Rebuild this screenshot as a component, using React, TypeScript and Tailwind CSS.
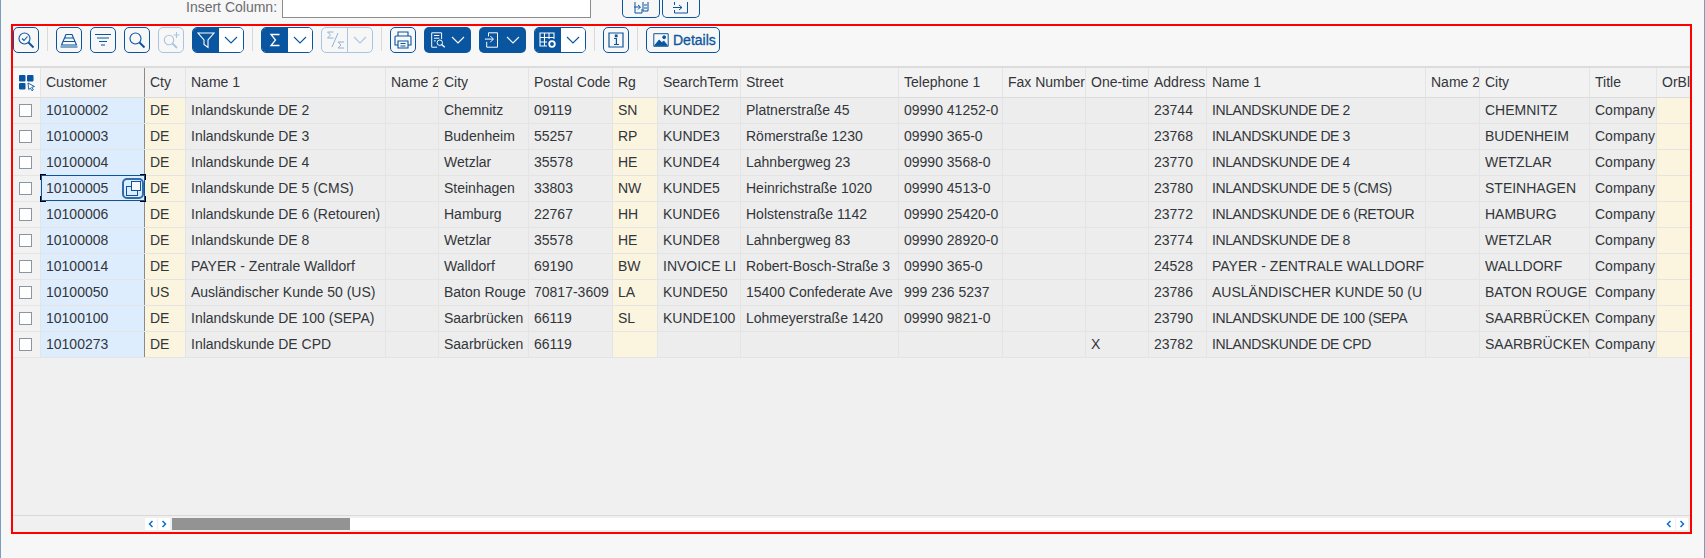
import React from "react";

const BLUE = "#0a55a0";

type Tone = "key" | "yellow" | "grey";
const cols: { w: string; h: string; tone: Tone }[] = [
  { w: "w-[104px]", h: "Customer", tone: "key" },
  { w: "w-[41px]", h: "Cty", tone: "yellow" },
  { w: "w-[200px]", h: "Name 1", tone: "grey" },
  { w: "w-[53px]", h: "Name 2", tone: "grey" },
  { w: "w-[90px]", h: "City", tone: "grey" },
  { w: "w-[84px]", h: "Postal Code", tone: "grey" },
  { w: "w-[45px]", h: "Rg", tone: "yellow" },
  { w: "w-[83px]", h: "SearchTerm", tone: "grey" },
  { w: "w-[158px]", h: "Street", tone: "grey" },
  { w: "w-[104px]", h: "Telephone 1", tone: "grey" },
  { w: "w-[83px]", h: "Fax Number", tone: "grey" },
  { w: "w-[63px]", h: "One-time", tone: "grey" },
  { w: "w-[58px]", h: "Address", tone: "grey" },
  { w: "w-[219px]", h: "Name 1", tone: "grey" },
  { w: "w-[54px]", h: "Name 2", tone: "grey" },
  { w: "w-[110px]", h: "City", tone: "grey" },
  { w: "w-[67px]", h: "Title", tone: "grey" },
  { w: "w-[60px]", h: "OrBlk", tone: "yellow" },
];

const rows: string[][] = [
  ["10100002", "DE", "Inlandskunde DE 2", "", "Chemnitz", "09119", "SN", "KUNDE2", "Platnerstraße 45", "09990 41252-0", "", "", "23744", "INLANDSKUNDE DE 2", "", "CHEMNITZ", "Company", ""],
  ["10100003", "DE", "Inlandskunde DE 3", "", "Budenheim", "55257", "RP", "KUNDE3", "Römerstraße 1230", "09990 365-0", "", "", "23768", "INLANDSKUNDE DE 3", "", "BUDENHEIM", "Company", ""],
  ["10100004", "DE", "Inlandskunde DE 4", "", "Wetzlar", "35578", "HE", "KUNDE4", "Lahnbergweg 23", "09990 3568-0", "", "", "23770", "INLANDSKUNDE DE 4", "", "WETZLAR", "Company", ""],
  ["10100005", "DE", "Inlandskunde DE 5 (CMS)", "", "Steinhagen", "33803", "NW", "KUNDE5", "Heinrichstraße 1020", "09990 4513-0", "", "", "23780", "INLANDSKUNDE DE 5 (CMS)", "", "STEINHAGEN", "Company", ""],
  ["10100006", "DE", "Inlandskunde DE 6 (Retouren)", "", "Hamburg", "22767", "HH", "KUNDE6", "Holstenstraße 1142", "09990 25420-0", "", "", "23772", "INLANDSKUNDE DE 6 (RETOUR", "", "HAMBURG", "Company", ""],
  ["10100008", "DE", "Inlandskunde DE 8", "", "Wetzlar", "35578", "HE", "KUNDE8", "Lahnbergweg 83", "09990 28920-0", "", "", "23774", "INLANDSKUNDE DE 8", "", "WETZLAR", "Company", ""],
  ["10100014", "DE", "PAYER - Zentrale Walldorf", "", "Walldorf", "69190", "BW", "INVOICE LI", "Robert-Bosch-Straße 3", "09990 365-0", "", "", "24528", "PAYER - ZENTRALE WALLDORF", "", "WALLDORF", "Company", ""],
  ["10100050", "US", "Ausländischer Kunde 50 (US)", "", "Baton Rouge", "70817-3609", "LA", "KUNDE50", "15400 Confederate Ave", "999 236 5237", "", "", "23786", "AUSLÄNDISCHER KUNDE 50 (U", "", "BATON ROUGE", "Company", ""],
  ["10100100", "DE", "Inlandskunde DE 100 (SEPA)", "", "Saarbrücken", "66119", "SL", "KUNDE100", "Lohmeyerstraße 1420", "09990 9821-0", "", "", "23790", "INLANDSKUNDE DE 100 (SEPA", "", "SAARBRÜCKEN", "Company", ""],
  ["10100273", "DE", "Inlandskunde DE CPD", "", "Saarbrücken", "66119", "", "", "", "", "", "X", "23782", "INLANDSKUNDE DE CPD", "", "SAARBRÜCKEN", "Company", ""],
];

function Ico({ children, color = BLUE, size = 20, sw = 1.1 }: { children: React.ReactNode; color?: string; size?: number; sw?: number }) {
  return (
    <svg width={size} height={size} viewBox="0 0 20 20" fill="none" stroke={color} strokeWidth={sw} className="block shrink-0">
      {children}
    </svg>
  );
}

function Chevron({ color = BLUE }: { color?: string }) {
  return (
    <svg width="14" height="8" viewBox="0 0 14 8" fill="none" stroke={color} strokeWidth="1.1" className="block">
      <path d="M1 1l6 6 6-6" />
    </svg>
  );
}

function Btn({ children, disabled }: { children: React.ReactNode; disabled?: boolean }) {
  return (
    <div className={`w-[26px] h-[26px] shrink-0 rounded-[5px] border flex items-center justify-center ${disabled ? "border-[#a9c5e2]" : "border-[#0a55a0]"}`}>
      {children}
    </div>
  );
}

function Sep() {
  return <div className="w-px h-[24px] bg-[#d9d9d9] shrink-0" />;
}

function Split({ children }: { children: React.ReactNode }) {
  return (
    <div className="h-[26px] w-[52px] shrink-0 flex rounded-[5px] overflow-hidden border border-[#0a55a0]">
      <div className="w-[26px] shrink-0 bg-[#0a55a0] flex items-center justify-center">{children}</div>
      <div className="flex-1 bg-white flex items-center justify-center">
        <Chevron />
      </div>
    </div>
  );
}

function Menu({ children }: { children: React.ReactNode }) {
  return (
    <div className="h-[26px] w-[47px] shrink-0 rounded-[5px] bg-[#0a55a0] flex items-center pl-[5px] gap-[4px]">
      {children}
      <Chevron color="#ffffff" />
    </div>
  );
}

const toneBg: Record<Tone, string> = {
  key: "bg-[#deedfe]",
  yellow: "bg-[#fbf5e0]",
  grey: "bg-[#ededed]",
};

function Corners() {
  return (
    <>
      <span className="absolute left-[-2px] top-[-2px] w-[6px] h-[6px] border-l border-t border-black" />
      <span className="absolute right-[-2px] top-[-2px] w-[6px] h-[6px] border-r border-t border-black" />
      <span className="absolute left-[-2px] bottom-[-2px] w-[6px] h-[6px] border-l border-b border-black" />
      <span className="absolute right-[-2px] bottom-[-2px] w-[6px] h-[6px] border-r border-b border-black" />
    </>
  );
}

function Row({ data, selected }: { data: string[]; selected: boolean }) {
  return (
    <div className="flex h-[26px] w-max border-b border-[#e4e4e4]">
      <div className="w-[28px] shrink-0 bg-[#f2f2f2] border-r border-[#e4e4e4] flex items-center pl-[6px]">
        <div className="w-[13px] h-[13px] bg-white border border-[#8996a3]" />
      </div>
      {cols.map((c, i) => (
        <div
          key={i}
          className={`${c.w} ${toneBg[c.tone]} ${i === 0 ? "border-[#8a8a8a]" : "border-[#e4e4e4]"} ${data[i].startsWith("INLANDSKUNDE") ? "tracking-[-0.4px]" : ""} shrink-0 border-r pl-[5px] pb-[2px] flex items-center overflow-hidden whitespace-nowrap`}
        >
          {data[i]}
        </div>
      ))}
      {selected && (
        <div className="absolute left-[28px] w-[104px] h-[26px] border border-[#0a55a0] mt-[-1px]">
          <Corners />
          <div className="absolute left-[80px] top-[2px] w-[22px] h-[21px] rounded-[5px] border-2 border-[#2e6cad] bg-[#deedfe]">
            <div className="absolute left-[2px] top-[6px] w-[12px] h-[10px] border border-[#0a55a0]" />
            <div className="absolute left-[7px] top-[1px] w-[10px] h-[10px] border border-[#0a55a0] bg-[#f4f8fd]" />
          </div>
        </div>
      )}
    </div>
  );
}

function ScrollArrow({ right }: { right?: boolean }) {
  return (
    <div className="w-[12px] h-[12px] bg-white flex items-center justify-center shrink-0">
      <svg width="6" height="8" viewBox="0 0 6 8" fill="none" stroke="#0a6ed1" strokeWidth="1.5">
        <path d={right ? "M1.5 1l3 3-3 3" : "M4.5 1l-3 3 3 3"} />
      </svg>
    </div>
  );
}

export default function App() {
  return (
    <div
      className="w-[1705px] h-[558px] bg-[#f7f7f7] border-x border-[#7c9dc0] overflow-hidden text-[14px] leading-none text-[#32363a]"
      style={{ fontFamily: '"Liberation Sans", Arial, sans-serif' }}
    >
      {/* top strip */}
      <div className="h-[24px] flex items-start">
        <div className="ml-[185px] w-[96px] h-[14px] flex items-center text-[#6a6d70] whitespace-nowrap">Insert Column:</div>
        <div className="w-[309px] h-[18px] bg-white border-x border-b border-[#8c8c8c]" />
        <div className="ml-[31px] w-[38px] h-[18px] border-x border-b border-[#0a55a0] rounded-b-[5px] flex justify-center items-end pb-[3px]">
          <svg width="16" height="12" viewBox="0 0 16 12" fill="none" stroke={BLUE} strokeWidth="1">
            <path d="M2 0v11h7V7M1 5h6M5 3l2.5 2L5 7.5M10 0v9h5V0M11 3h3M11 6h3" />
          </svg>
        </div>
        <div className="ml-[2px] w-[38px] h-[18px] border-x border-b border-[#0a55a0] rounded-b-[5px] flex justify-center items-end pb-[3px]">
          <svg width="16" height="12" viewBox="0 0 16 12" fill="none" stroke={BLUE} strokeWidth="1">
            <path d="M1.5 0v3M1.5 8v3h13V0M0 5.5h9M6 3l3 2.5L6 8" />
          </svg>
        </div>
      </div>

      {/* red frame */}
      <div className="ml-[10px] w-[1681px] h-[510px] border-2 border-[#ff0000] flex flex-col overflow-hidden">
        {/* toolbar */}
        <div className="h-[40px] shrink-0 flex items-start pt-px gap-[8px]">
          <Btn>
            <Ico>
              <circle cx="8.5" cy="8.5" r="5.5" />
              <path d="M12.5 12.5l5 5" strokeWidth="2" />
              <path d="M6 8.5l2 2 3.5-4" />
            </Ico>
          </Btn>
          <Sep />
          <Btn>
            <Ico>
              <path d="M7 4.5h6l4.5 10.5h-15zM5.6 8h8.8M4 11.5h12M1.5 17h17" />
            </Ico>
          </Btn>
          <Btn>
            <Ico>
              <path d="M2 4.5h16M4 8h12M6 11.5h8M8 15h4" />
            </Ico>
          </Btn>
          <Btn>
            <Ico>
              <circle cx="8.5" cy="8.5" r="5.5" />
              <path d="M12.5 12.5l5 5" strokeWidth="2" />
            </Ico>
          </Btn>
          <Btn disabled>
            <Ico color="#a9c5e2">
              <circle cx="8" cy="10" r="4.7" />
              <path d="M11.5 13.5l4.5 4.5" strokeWidth="1.8" />
              <path d="M15.5 2v6M12.5 5h6" />
            </Ico>
          </Btn>
          <Split>
            <Ico color="#ffffff">
              <path d="M2 3h16l-6 7v7.5l-4-3V10z" />
            </Ico>
          </Split>
          <Sep />
          <Split>
            <Ico color="#ffffff" sw={1.3}>
              <path d="M14.5 4.5H6l4.5 5.5L6 15.5h8.5" />
            </Ico>
          </Split>
          <div className="h-[26px] w-[52px] shrink-0 flex rounded-[5px] border border-[#a9c5e2]">
            <div className="w-[26px] shrink-0 border-r border-[#a9c5e2] flex items-center justify-center">
              <Ico color="#8fb2d6" sw={1}>
                <path d="M8.5 2H2.5l3 3-3 3h6M19 12h-6l3 3-3 3h6" />
                <path d="M13 3L7 17" />
              </Ico>
            </div>
            <div className="flex-1 flex items-center justify-center">
              <Chevron color="#a9c5e2" />
            </div>
          </div>
          <Sep />
          <Btn>
            <Ico>
              <path d="M5 6V2h10v4M5 15H2V7a1 1 0 011-1h14a1 1 0 011 1v8h-3" />
              <path d="M5 11h10v7H5zM7.5 13.5h5M7.5 16h5" />
            </Ico>
          </Btn>
          <Menu>
            <Ico color="#ffffff" size={18}>
              <path d="M9 18H3V2h11v7M5.5 5h6M5.5 8h6M5.5 11h2" />
              <circle cx="12" cy="13" r="3" />
              <path d="M14 15l3.5 3" strokeWidth="1.6" />
            </Ico>
          </Menu>
          <Menu>
            <Ico color="#ffffff" size={18}>
              <path d="M5 6V2h10v16H3v-6M1 9h9M7 5.5L10.5 9 7 12.5" />
            </Ico>
          </Menu>
          <Split>
            <Ico color="#ffffff">
              <path d="M9 16H2V3h14v6M2 7.5h14M2 12h7M6.5 3v13M11 3v6" />
              <circle cx="14" cy="14" r="2.8" strokeWidth="1.8" />
            </Ico>
          </Split>
          <Sep />
          <Btn>
            <Ico sw={1.2}>
              <path d="M3 3h14v14H3z" />
              <path d="M8 8.5h2.4V14.5M8 14.5h5" />
              <path d="M9.4 5h1.6v1.6H9.4z" fill={BLUE} />
            </Ico>
          </Btn>
          <Sep />
          <div className="h-[26px] w-[74px] shrink-0 rounded-[5px] border border-[#0a55a0] flex items-center pl-[5px] gap-[3px] text-[#0a55a0] text-[14px]">
            <Ico size={18}>
              <path d="M2 3h16v14H2z" />
              <path d="M3 16l5-6 3 3 2-2 4 5z" fill={BLUE} />
              <circle cx="13.5" cy="7" r="1.6" fill={BLUE} />
            </Ico>
            <span className="[-webkit-text-stroke:0.3px_#0a55a0]">Details</span>
          </div>
        </div>

        {/* table */}
        <div className="flex-1 min-h-0 bg-[#f0f0f0] overflow-hidden relative">
          <div className="flex h-[32px] w-max border-t-2 border-b border-[#dcdcdc]">
            <div className="w-[28px] shrink-0 bg-[#f9f9f9] border-r border-[#e4e4e4] flex items-center pl-[6px]">
              <svg width="17" height="16" viewBox="0 0 17 16" className="block">
                <rect x="0" y="0" width="6.5" height="6.5" rx="1" fill={BLUE} />
                <rect x="8" y="0" width="6.5" height="6.5" rx="1" fill={BLUE} />
                <rect x="0" y="8" width="6.5" height="6.5" rx="1" fill={BLUE} />
                <path d="M9 8l6.5 3.5-2.8.8 1.6 2.6-1.4.8-1.5-2.6L9.7 14.5z" fill="#ffffff" stroke={BLUE} strokeWidth="0.9" />
              </svg>
            </div>
            {cols.map((c, i) => (
              <div
                key={i}
                className={`${c.w} ${i === 0 ? "border-[#8a8a8a]" : "border-[#e4e4e4]"} shrink-0 bg-[#f2f2f2] border-r pl-[5px] pb-[2px] flex items-center overflow-hidden whitespace-nowrap`}
              >
                {c.h}
              </div>
            ))}
          </div>
          {rows.map((r, i) => (
            <Row key={i} data={r} selected={i === 3} />
          ))}
        </div>

        {/* footer scrollbar */}
        <div className="h-[17px] shrink-0 bg-[#f0f0f0] border-t border-[#d9d9d9] pt-[2px] flex items-start">
          <div className="ml-[132px] flex gap-px">
            <ScrollArrow />
            <ScrollArrow right />
          </div>
          <div className="ml-[2px] w-[1491px] h-[12px] bg-white shrink-0">
            <div className="w-[178px] h-full bg-[#939393]" />
          </div>
          <div className="flex gap-px">
            <ScrollArrow />
            <ScrollArrow right />
          </div>
        </div>
      </div>
    </div>
  );
}
